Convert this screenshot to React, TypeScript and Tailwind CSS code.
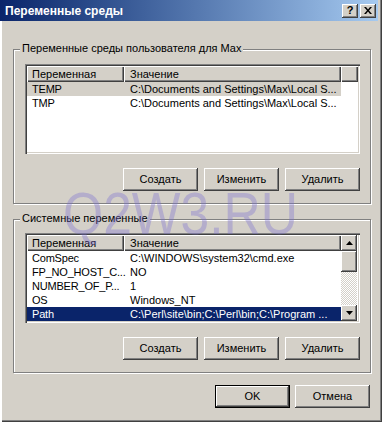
import React from 'react';

const raised =
  'shadow-[inset_-1px_-1px_0_#404040,inset_1px_1px_0_#ffffff,inset_-2px_-2px_0_#808080,inset_2px_2px_0_#d4d0c8]';
const sunken =
  'shadow-[inset_1px_1px_0_#808080,inset_2px_2px_0_#404040,inset_-1px_-1px_0_#ffffff,inset_-2px_-2px_0_#d4d0c8]';
const headerCell =
  'shadow-[inset_1px_1px_0_#ffffff,inset_-1px_-1px_0_#404040,inset_-2px_-2px_0_#808080]';

interface EnvVar {
  name: string;
  value: string;
}

const userVars: EnvVar[] = [
  { name: 'TEMP', value: 'C:\\Documents and Settings\\Max\\Local S...' },
  { name: 'TMP', value: 'C:\\Documents and Settings\\Max\\Local S...' },
];

const systemVars: EnvVar[] = [
  { name: 'ComSpec', value: 'C:\\WINDOWS\\system32\\cmd.exe' },
  { name: 'FP_NO_HOST_C...', value: 'NO' },
  { name: 'NUMBER_OF_P...', value: '1' },
  { name: 'OS', value: 'Windows_NT' },
  { name: 'Path', value: 'C:\\Perl\\site\\bin;C:\\Perl\\bin;C:\\Program ...' },
];

const Button: React.FC<{ label: string; isDefault?: boolean }> = ({ label, isDefault }) => (
  <button
    className={`h-[23px] w-[75px] bg-[#d4d0c8] text-[11px] text-black ${
      isDefault ? 'border border-black' : ''
    } ${raised}`}
  >
    {label}
  </button>
);

const Header: React.FC = () => (
  <div className="flex h-[16px] leading-[16px]">
    <div className={`w-[97px] pl-[5px] ${headerCell}`}>Переменная</div>
    <div className={`w-[217px] pl-[6px] ${headerCell}`}>Значение</div>
  </div>
);

const Rows: React.FC<{ items: EnvVar[]; selected: number; focused?: boolean }> = ({
  items,
  selected,
  focused,
}) => (
  <div className="flex flex-col">
    {items.map((v, i) => {
      const sel = i === selected;
      const tone = sel ? (focused ? 'bg-[#0a246a] text-white' : 'bg-[#d4d0c8]') : '';
      return (
        <div key={v.name} className={`flex h-[14px] w-[314px] leading-[14px] ${tone}`}>
          <div className="w-[97px] shrink-0 whitespace-nowrap pl-[5px] tracking-[-0.2px]">{v.name}</div>
          <div className="w-[217px] overflow-hidden whitespace-nowrap pl-[6px]">{v.value}</div>
        </div>
      );
    })}
  </div>
);

const Arrow: React.FC<{ down?: boolean }> = ({ down }) => (
  <svg width="7" height="4" viewBox="0 0 7 4">
    {down ? <path d="M0 0h7L3.5 4z" fill="#000" /> : <path d="M0 4h7L3.5 0z" fill="#000" />}
  </svg>
);

const ScrollBar: React.FC = () => (
  <div className="flex w-[16px] flex-col">
    <div className={`flex h-[16px] items-center justify-center bg-[#d4d0c8] ${raised}`}>
      <Arrow />
    </div>
    <div className={`h-[21px] bg-[#d4d0c8] ${raised}`} />
    <div className="flex-1 bg-[image:repeating-conic-gradient(#ffffff_0%_25%,#d4d0c8_0%_50%)] bg-[length:2px_2px]" />
    <div className={`flex h-[16px] items-center justify-center bg-[#d4d0c8] ${raised}`}>
      <Arrow down />
    </div>
  </div>
);

const GroupBox: React.FC<{ title: string; height: string; padTop: string; children: React.ReactNode }> = ({
  title,
  height,
  padTop,
  children,
}) => (
  <div
    className={`relative w-[358px] border border-[#808080] pl-[11px] shadow-[inset_1px_1px_0_#ffffff,1px_1px_0_#ffffff] ${height} ${padTop}`}
  >
    <span className="absolute left-[6px] top-[-8px] bg-[#d4d0c8] px-[2px] leading-[13px]">{title}</span>
    {children}
  </div>
);

export default function App() {
  return (
    <div
      className="relative flex h-[422px] w-[382px] flex-col overflow-hidden bg-[#d4d0c8] text-[11px] text-black shadow-[inset_2px_0_0_#ffffff,inset_-1px_-1px_0_#404040,inset_-2px_-2px_0_#808080]"
      style={{ fontFamily: '"Liberation Sans", Arial, sans-serif' }}
    >
      {/* Title bar */}
      <div className="mr-[4px] flex h-[21px] items-center justify-between bg-gradient-to-r from-[#0a246a] to-[#a6caf0] pl-[5px] pr-[2px]">
        <span className="pt-[1px] text-[12px] font-bold text-white">Переменные среды</span>
        <div className="flex gap-[2px]">
          <div className={`flex h-[14px] w-[16px] items-center justify-center bg-[#d4d0c8] text-[11px] font-bold leading-none ${raised}`}>
            ?
          </div>
          <div className={`flex h-[14px] w-[16px] items-center justify-center bg-[#d4d0c8] ${raised}`}>
            <svg width="8" height="7" viewBox="0 0 8 7">
              <path d="M0 0h2l2 2.5L6 0h2L5 3.5 8 7H6L4 4.5 2 7H0l3-3.5z" fill="#000" />
            </svg>
          </div>
        </div>
      </div>

      <div className="flex flex-col pl-[13px] pt-[28px]">
        <GroupBox title="Переменные среды пользователя для Max" height="h-[155px]" padTop="pt-[14px]">
          <div className={`h-[90px] w-[335px] bg-white p-[2px] ${sunken}`}>
            <div className="flex h-[16px] bg-[#d4d0c8]">
              <Header />
              <div className={`flex-1 ${headerCell}`} />
            </div>
            <Rows items={userVars} selected={0} />
          </div>
          <div className="mt-[14px] flex w-[335px] justify-end gap-[6px]">
            <Button label="Создать" />
            <Button label="Изменить" />
            <Button label="Удалить" />
          </div>
        </GroupBox>

        <div className="mt-[15px]">
          <GroupBox title="Системные переменные" height="h-[154px]" padTop="pt-[13px]">
            <div className={`flex h-[90px] w-[335px] bg-white p-[2px] ${sunken}`}>
              <div className="flex w-[314px] flex-col">
                <div className="bg-[#d4d0c8]">
                  <Header />
                </div>
                <Rows items={systemVars} selected={4} focused />
              </div>
              <ScrollBar />
            </div>
            <div className="mt-[14px] flex w-[335px] justify-end gap-[6px]">
              <Button label="Создать" />
              <Button label="Изменить" />
              <Button label="Удалить" />
            </div>
          </GroupBox>
        </div>

        <div className="mt-[12px] flex w-[357px] justify-end gap-[5px]">
          <Button label="OK" isDefault />
          <Button label="Отмена" />
        </div>
      </div>

      {/* Watermark */}
      <div className="pointer-events-none absolute left-[63px] top-[184px] origin-left scale-x-[0.86] whitespace-nowrap text-[60px] leading-none text-[rgba(120,110,210,0.35)]">
        Q2W3.RU
      </div>
    </div>
  );
}
